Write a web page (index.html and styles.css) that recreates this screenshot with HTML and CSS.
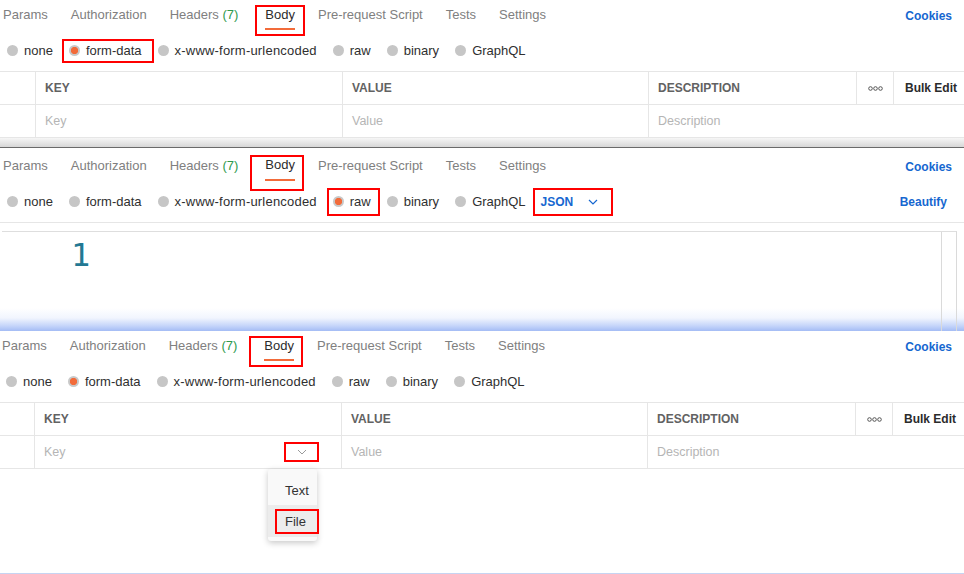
FILE: index.html
```html
<!DOCTYPE html>
<html lang="en">
<head>
<meta charset="utf-8">
<title>Postman body</title>
<link rel="stylesheet" href="styles.css">
</head>
<body>
<main class="page">

  <section class="panel panel-one">
    <nav class="tabs">
      <span class="tab">Params</span>
      <span class="tab">Authorization</span>
      <span class="tab">Headers <span class="count">(7)</span></span>
      <span class="tab tab-active"><span class="tab-label">Body</span></span>
      <span class="tab">Pre-request Script</span>
      <span class="tab">Tests</span>
      <span class="tab">Settings</span>
      <span class="link cookies">Cookies</span>
    </nav>
    <div class="modes">
      <span class="mode"><span class="radio"></span>none</span>
      <span class="mode boxed boxed-form"><span class="radio radio-on"></span>form-data</span>
      <span class="mode mode-wide"><span class="radio"></span>x-www-form-urlencoded</span>
      <span class="mode"><span class="radio"></span>raw</span>
      <span class="mode"><span class="radio"></span>binary</span>
      <span class="mode"><span class="radio"></span>GraphQL</span>
    </div>
    <div class="kv">
      <div class="kv-row kv-head">
        <div class="kv-cell"></div>
        <div class="kv-cell">KEY</div>
        <div class="kv-cell">VALUE</div>
        <div class="kv-cell">DESCRIPTION</div>
        <div class="kv-cell kv-more"><svg width="15" height="5" viewBox="0 0 15 5"><circle cx="2.5" cy="2.5" r="1.8" fill="none" stroke="#555" stroke-width="1"/><circle cx="7.5" cy="2.5" r="1.8" fill="none" stroke="#555" stroke-width="1"/><circle cx="12.5" cy="2.5" r="1.8" fill="none" stroke="#555" stroke-width="1"/></svg></div>
        <div class="kv-cell kv-bulk">Bulk Edit</div>
      </div>
      <div class="kv-row">
        <div class="kv-cell"></div>
        <div class="kv-cell ph">Key</div>
        <div class="kv-cell ph">Value</div>
        <div class="kv-cell ph kv-span">Description</div>
      </div>
    </div>
    <div class="shade"></div>
  </section>

  <section class="panel panel-two">
    <nav class="tabs">
      <span class="tab">Params</span>
      <span class="tab">Authorization</span>
      <span class="tab">Headers <span class="count">(7)</span></span>
      <span class="tab tab-active"><span class="tab-label">Body</span></span>
      <span class="tab">Pre-request Script</span>
      <span class="tab">Tests</span>
      <span class="tab">Settings</span>
      <span class="link cookies">Cookies</span>
    </nav>
    <div class="modes">
      <span class="mode"><span class="radio"></span>none</span>
      <span class="mode"><span class="radio"></span>form-data</span>
      <span class="mode mode-wide"><span class="radio"></span>x-www-form-urlencoded</span>
      <span class="mode boxed boxed-raw"><span class="radio radio-on"></span>raw</span>
      <span class="mode"><span class="radio"></span>binary</span>
      <span class="mode"><span class="radio"></span>GraphQL</span>
      <span class="lang"><span class="lang-name">JSON</span><svg class="lang-chev" width="10" height="6" viewBox="0 0 10 6"><path d="M1 1 L5 5 L9 1" fill="none" stroke="#1667d0" stroke-width="1.2"/></svg></span>
      <span class="link beautify">Beautify</span>
    </div>
    <div class="editor">
      <div class="editor-body"><span class="ln">1</span></div>
      <div class="editor-scroll"></div>
    </div>
  </section>

  <section class="panel panel-three">
    <nav class="tabs">
      <span class="tab">Params</span>
      <span class="tab">Authorization</span>
      <span class="tab">Headers <span class="count">(7)</span></span>
      <span class="tab tab-active"><span class="tab-label">Body</span></span>
      <span class="tab">Pre-request Script</span>
      <span class="tab">Tests</span>
      <span class="tab">Settings</span>
      <span class="link cookies">Cookies</span>
    </nav>
    <div class="modes">
      <span class="mode"><span class="radio"></span>none</span>
      <span class="mode"><span class="radio radio-on"></span>form-data</span>
      <span class="mode mode-wide"><span class="radio"></span>x-www-form-urlencoded</span>
      <span class="mode"><span class="radio"></span>raw</span>
      <span class="mode"><span class="radio"></span>binary</span>
      <span class="mode"><span class="radio"></span>GraphQL</span>
    </div>
    <div class="kv">
      <div class="kv-row kv-head">
        <div class="kv-cell"></div>
        <div class="kv-cell">KEY</div>
        <div class="kv-cell">VALUE</div>
        <div class="kv-cell">DESCRIPTION</div>
        <div class="kv-cell kv-more"><svg width="15" height="5" viewBox="0 0 15 5"><circle cx="2.5" cy="2.5" r="1.8" fill="none" stroke="#555" stroke-width="1"/><circle cx="7.5" cy="2.5" r="1.8" fill="none" stroke="#555" stroke-width="1"/><circle cx="12.5" cy="2.5" r="1.8" fill="none" stroke="#555" stroke-width="1"/></svg></div>
        <div class="kv-cell kv-bulk">Bulk Edit</div>
      </div>
      <div class="kv-row">
        <div class="kv-cell"></div>
        <div class="kv-cell ph kv-key">
          <span>Key</span>
          <span class="type-toggle"><svg width="10" height="6" viewBox="0 0 10 6"><path d="M1 1 L5 5 L9 1" fill="none" stroke="#9a9a9a" stroke-width="1"/></svg></span>
          <div class="type-menu">
            <div class="type-item">Text</div>
            <div class="type-item type-item-on"><span class="type-file">File</span></div>
          </div>
        </div>
        <div class="kv-cell ph">Value</div>
        <div class="kv-cell ph kv-span">Description</div>
      </div>
    </div>
  </section>

</main>
</body>
</html>
```

FILE: styles.css
```css
html, body {
  margin: 0;
  padding: 0;
  background: #ffffff;
}

body {
  width: 964px;
  height: 574px;
  overflow: hidden;
  font-family: "Liberation Sans", Arial, sans-serif;
  font-size: 13px;
  color: #333333;
}

.page {
  display: flex;
  flex-direction: column;
}

.panel {
  display: flex;
  flex-direction: column;
  box-sizing: border-box;
  background: #ffffff;
}

.panel-one {
  height: 148px;
}

.panel-two {
  height: 183px;
  background: linear-gradient(to bottom, #ffffff 0, #ffffff 160px, #f1f5fe 170px, #c4d4fa 178px, #a4bcf5 183px);
}

.panel-three {
  height: 243px;
  margin-left: -1px;
  border-bottom: 1px solid #c6d4f2;
}

/* ---------- tabs ---------- */
.tabs {
  display: flex;
  align-items: flex-start;
  gap: 23px;
  height: 30px;
  padding-left: 3px;
}

.tab {
  padding-top: 7px;
  line-height: 16px;
  color: #808080;
  white-space: nowrap;
}

.count {
  color: #2e9a4e;
}

.tab-active {
  margin-top: 5px;
  margin-left: -6px;
  margin-right: -10px;
  padding: 0 8px 4px 8px;
  border: 2px solid #ff0000;
  color: #2b2b2b;
}

.tab-label {
  display: inline-block;
  padding-bottom: 5px;
  border-bottom: 2px solid #f26b3a;
}

.link {
  color: #1667d0;
  font-weight: bold;
  font-size: 12px;
  white-space: nowrap;
}

.cookies {
  margin-left: auto;
  padding-right: 12px;
  padding-top: 8px;
  line-height: 16px;
}

.panel-two .tabs {
  height: 33px;
}

.panel-two .tab {
  padding-top: 10px;
}

.panel-two .tab-active,
.panel-three .tab-active {
  margin-left: -11px;
  margin-right: -9px;
  padding-left: 13px;
  padding-right: 7px;
}

.panel-two .tab-active {
  margin-top: 7px;
  padding-top: 0;
  padding-bottom: 8px;
}

.panel-two .tab-active .tab-label {
  padding-bottom: 6px;
}

.panel-two .cookies {
  padding-top: 11px;
}

/* ---------- body modes ---------- */
.modes {
  display: flex;
  align-items: center;
  gap: 16px;
  height: 41px;
  padding-left: 7px;
}

.panel-two .modes {
  border-bottom: 1px solid #e6e6e6;
}

.mode {
  display: flex;
  align-items: center;
  line-height: 16px;
  color: #2f2f2f;
  white-space: nowrap;
}

.mode-wide {
  letter-spacing: 0.2px;
}

.radio {
  width: 11px;
  height: 11px;
  border-radius: 50%;
  background: #c6c6c6;
  margin-right: 6px;
  flex: none;
}

.radio-on {
  background: radial-gradient(circle, #f26b3a 0, #f26b3a 3.3px, #c8c8c8 4px);
}

.boxed {
  border: 2px solid #ff0000;
}

.boxed-form {
  padding: 2px 10px 2px 5px;
  margin-left: -7px;
  margin-right: -12px;
}

.boxed-raw {
  padding: 4px 7px 4px 4px;
  margin-left: -6px;
  margin-right: -9px;
}

.lang {
  display: flex;
  align-items: center;
  margin-left: -9px;
  padding: 4px 13px 4px 6px;
  border: 2px solid #ff0000;
  line-height: 16px;
}

.lang-name {
  color: #1667d0;
  font-weight: bold;
  font-size: 12px;
}

.lang-chev {
  margin-left: 15px;
  display: block;
}

.beautify {
  margin-left: auto;
  padding-right: 17px;
}

/* ---------- key/value table ---------- */
.kv {
  border-top: 1px solid #e6e6e6;
}

.kv-row {
  display: grid;
  grid-template-columns: 35px 307px 306px 208px 37px 1fr;
  height: 33px;
  box-sizing: border-box;
  border-bottom: 1px solid #e6e6e6;
}

.kv-cell {
  display: flex;
  align-items: center;
  padding-left: 9px;
  border-left: 1px solid #e6e6e6;
  min-width: 0;
}

.kv-cell:first-child {
  border-left: none;
  padding-left: 0;
}

.kv-head .kv-cell {
  font-size: 12px;
  font-weight: bold;
  color: #626262;
}

.kv-head .kv-more {
  justify-content: center;
  padding-left: 0;
}

.kv-head .kv-bulk {
  color: #2b2b2b;
  padding-left: 11px;
}

.ph {
  color: #b5b5b5;
  font-size: 12.5px;
}

.kv-span {
  grid-column: 4 / -1;
}

/* ---------- shading / editor ---------- */
.shade {
  height: 9px;
  background: linear-gradient(to bottom, #f6f6f6, #d7d7d7);
  border-bottom: 1px solid #6a6a6a;
}

.editor {
  flex: 1;
  display: flex;
  margin: 8px 7px 0 2px;
  border-top: 1px solid #dedede;
  border-right: 1px solid #dadada;
}

.editor-body {
  flex: 1;
  padding: 4px 0 0 69px;
}

.ln {
  font-family: "DejaVu Sans Mono", monospace;
  font-size: 32px;
  line-height: 38px;
  color: #237893;
}

.editor-scroll {
  width: 14px;
  border-left: 1px solid #dadada;
}

/* ---------- key type dropdown ---------- */
.kv-key {
  position: relative;
}

.type-toggle {
  margin-left: auto;
  margin-right: 22px;
  width: 35px;
  height: 20px;
  box-sizing: border-box;
  border: 2px solid #ff0000;
  display: flex;
  align-items: center;
  justify-content: center;
}

.type-toggle svg {
  display: block;
}

.type-menu {
  position: absolute;
  top: calc(100% + 1px);
  left: 233px;
  width: 49px;
  padding: 6px 0 4px;
  background: #f9f9f9;
  border-radius: 3px;
  box-shadow: 0 2px 6px rgba(0, 0, 0, 0.22);
  z-index: 2;
}

.type-item {
  height: 30px;
  display: flex;
  align-items: center;
  padding-left: 17px;
  font-size: 13px;
  color: #333333;
}

.type-item-on {
  height: 32px;
  padding-left: 7px;
  background: #ececec;
}

.type-file {
  display: flex;
  align-items: center;
  box-sizing: border-box;
  width: 44px;
  height: 25px;
  flex: none;
  padding-left: 8px;
  border: 2px solid #ff0000;
}
```
